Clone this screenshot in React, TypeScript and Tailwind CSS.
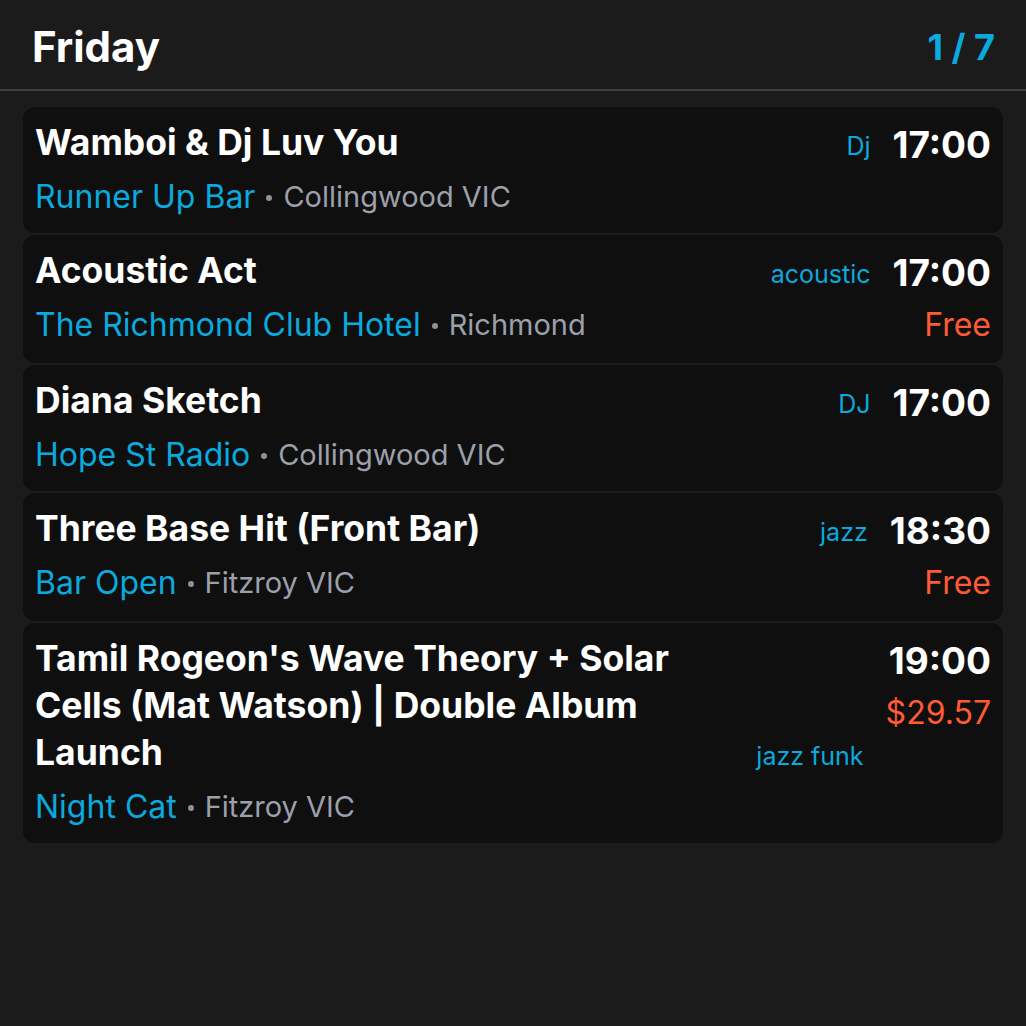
import React from "react";

type Gig = {
  title: string;
  venue: string;
  place: string;
  tag: string;
  time: string;
  price?: string;
};

const gigs: Gig[] = [
  { title: "Wamboi & Dj Luv You", venue: "Runner Up Bar", place: "Collingwood VIC", tag: "Dj", time: "17:00" },
  { title: "Acoustic Act", venue: "The Richmond Club Hotel", place: "Richmond", tag: "acoustic", time: "17:00", price: "Free" },
  { title: "Diana Sketch", venue: "Hope St Radio", place: "Collingwood VIC", tag: "DJ", time: "17:00" },
  { title: "Three Base Hit (Front Bar)", venue: "Bar Open", place: "Fitzroy VIC", tag: "jazz", time: "18:30", price: "Free" },
  {
    title: "Tamil Rogeon's Wave Theory + Solar Cells (Mat Watson) | Double Album Launch",
    venue: "Night Cat",
    place: "Fitzroy VIC",
    tag: "jazz funk",
    time: "19:00",
    price: "$29.57",
  },
];

function GigCard({ gig }: { gig: Gig }) {
  return (
    <div className="flex gap-[22px] rounded-xl bg-[#0f0f0f] px-3 py-3">
      <div className="flex-1 min-w-0">
        <div className="flex items-baseline-last gap-6">
          <h3 className="flex-1 text-[35.5px] font-bold leading-[47px] text-white">{gig.title}</h3>
          <span className="text-[25px] leading-[32px] text-[#0aa9de]">{gig.tag}</span>
        </div>
        <div className="mt-[6px] flex items-center text-[32px] leading-[49px]">
          <span className="text-[#0aa9de]">{gig.venue}</span>
          <span className="mx-[11px] mt-[3px] h-[6px] w-[6px] rounded-full bg-[#8e929c]" />
          <span className="text-[29px] text-[#9ca0ab]">{gig.place}</span>
        </div>
      </div>
      <div className="flex flex-col items-end">
        <span className="text-[37px] font-bold leading-[52px] text-white">{gig.time}</span>
        {gig.price && <span className="text-[32px] leading-[52px] text-[#ff5a36]">{gig.price}</span>}
      </div>
    </div>
  );
}

export default function App() {
  return (
    <div className="min-h-screen bg-[#1b1b1b] font-['Inter',sans-serif]">
      <header className="flex h-[91px] items-center justify-between border-b-2 border-[#3a3f4a] pl-8 pr-[31px] pt-1">
        <h1 className="text-[42px] font-bold text-white">Friday</h1>
        <span className="text-[36px] font-bold text-[#0aa9de]">1 / 7</span>
      </header>
      <main className="flex flex-col gap-[2px] px-[23px] pt-4">
        {gigs.map((g) => (
          <GigCard key={g.title} gig={g} />
        ))}
      </main>
    </div>
  );
}
